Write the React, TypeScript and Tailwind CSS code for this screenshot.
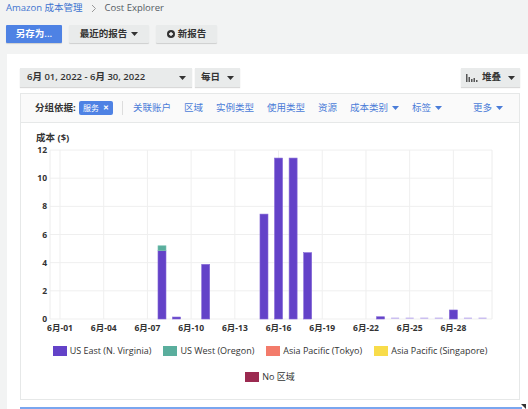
import React from 'react'

const FONT = "font-['Open_Sans','Noto_Sans_CJK_SC',sans-serif]"

const Caret: React.FC<{ className?: string }> = ({ className = 'fill-[#333]' }) => (
  <svg width="7" height="4" viewBox="0 0 7 4" className={className}>
    <path d="M0 0h7L3.5 4z" />
  </svg>
)

// chart geometry (svg coords)
const X0 = 29
const XR = 471
const Y0 = 175
const UNIT = 14.08
const dayX = (d: number) => 39 + (d - 1) * 14.57

type Bar = { d: number; v: number; t?: number; light?: boolean }

const bars: Bar[] = [
  { d: 8, v: 4.85, t: 0.35 },
  { d: 9, v: 0.14 },
  { d: 11, v: 3.88 },
  { d: 15, v: 7.45 },
  { d: 16, v: 11.43 },
  { d: 17, v: 11.43 },
  { d: 18, v: 4.71 },
  { d: 23, v: 0.16 },
  { d: 24, v: 0.1, light: true },
  { d: 25, v: 0.1, light: true },
  { d: 26, v: 0.1, light: true },
  { d: 27, v: 0.1, light: true },
  { d: 28, v: 0.64 },
  { d: 29, v: 0.1, light: true },
  { d: 30, v: 0.1, light: true },
]

const legendRows = [
  [
    { label: 'US East (N. Virginia)', color: 'bg-[#6342c8]' },
    { label: 'US West (Oregon)', color: 'bg-[#5aae9d]' },
    { label: 'Asia Pacific (Tokyo)', color: 'bg-[#f37b6b]' },
    { label: 'Asia Pacific (Singapore)', color: 'bg-[#f8dc4a]' },
  ],
  [{ label: 'No 区域', color: 'bg-[#9b2a50]' }],
]

const groupLinks = ['关联账户', '区域', '实例类型', '使用类型', '资源']

function CostChart() {
  const yTicks = [0, 2, 4, 6, 8, 10, 12]
  const xTicks = [1, 4, 7, 10, 13, 16, 19, 22, 25, 28]
  return (
    <svg width="497" height="192" viewBox="0 0 497 192" className="block">
      {yTicks.map((t) => {
        const y = Y0 - t * UNIT
        return (
          <g key={t}>
            <line x1={X0} x2={XR} y1={y} y2={y} stroke="#efefef" strokeWidth="1" />
            <text x="26" y={y + 3} textAnchor="end" fontSize="8.5" fontWeight="700" fill="#333">
              {t}
            </text>
          </g>
        )
      })}
      <line x1={X0} x2={X0} y1={Y0 - 12 * UNIT} y2={Y0} stroke="#ececec" />
      <line x1={XR} x2={XR} y1={Y0 - 12 * UNIT} y2={Y0} stroke="#ececec" />
      {xTicks.map((d) => (
        <g key={d}>
          <line x1={dayX(d)} x2={dayX(d)} y1={Y0 - 12 * UNIT} y2={Y0} stroke="#efefef" />
          <text x={dayX(d)} y="187" textAnchor="middle" fontSize="8.5" fontWeight="700" fill="#333">
            {`6月-${String(d).padStart(2, '0')}`}
          </text>
        </g>
      ))}
      {bars.map((b) => {
        const x = dayX(b.d) - 4
        const h = Math.max(b.v * UNIT, 1.5)
        return (
          <g key={b.d}>
            <rect
              x={x}
              y={Y0 - h}
              width="8"
              height={h}
              fill={b.light ? '#cbbff0' : '#6342c8'}
              stroke={b.light ? 'none' : '#8467d6'}
              strokeWidth="0.6"
            />
            {b.t && (
              <rect
                x={x}
                y={Y0 - h - b.t * UNIT}
                width="8"
                height={b.t * UNIT}
                fill="#5aae9d"
                stroke="#79c2b2"
                strokeWidth="0.6"
              />
            )}
          </g>
        )
      })}
    </svg>
  )
}

export default function App() {
  return (
    <div className={`${FONT} w-[528px] h-[409px] overflow-hidden bg-[#f2f3f3] text-[#333] flex flex-col`}>
      {/* breadcrumb */}
      <div className="h-[18px] pl-[6px] flex items-center gap-[8px] text-[9.5px]">
        <span className="text-[#3e74d0]">Amazon 成本管理</span>
        <svg width="6" height="9" viewBox="0 0 6 9" className="stroke-[#999] fill-none">
          <path d="M1 1l3.5 3.5L1 8" strokeWidth="1" />
        </svg>
        <span className="text-[#545b64]">Cost Explorer</span>
      </div>

      {/* action buttons */}
      <div className="mt-[8px] pl-[6px] flex items-center gap-[7px] text-[9.5px]">
        <button className="h-[18px] w-[56px] rounded-[1px] bg-[#4e82e4] text-white font-semibold shadow-[0_1px_1px_rgba(0,0,0,0.15)]">
          另存为...
        </button>
        <button className="h-[18px] w-[80px] flex items-center justify-center gap-[4px] rounded-[1px] bg-[#e9ebeb] font-semibold text-[#333] shadow-[0_1px_1px_rgba(0,0,0,0.15)]">
          最近的报告
          <Caret />
        </button>
        <button className="h-[18px] w-[61px] flex items-center justify-center gap-[3px] rounded-[1px] bg-[#e9ebeb] font-semibold text-[#333] shadow-[0_1px_1px_rgba(0,0,0,0.15)]">
          <svg width="8" height="8" viewBox="0 0 8 8">
            <circle cx="4" cy="4" r="4" fill="#333" />
            <path d="M4 2v4M2 4h4" stroke="#fff" strokeWidth="1.3" />
          </svg>
          新报告
        </button>
      </div>

      {/* main panel */}
      <div className="mt-[11px] ml-[7px] flex-1 bg-white pl-[13px] pr-[8px] pt-[14px] flex flex-col">
        <div className="h-[19px] flex items-stretch text-[9.5px] font-semibold">
          <div className="w-[172px] flex items-center justify-between pl-[7px] pr-[6px] bg-[#e9ebeb] shadow-[0_1px_1px_rgba(0,0,0,0.15)]">
            <span>6月 01, 2022 - 6月 30, 2022</span>
            <Caret />
          </div>
          <div className="ml-[3px] w-[45px] flex items-center justify-between px-[6px] bg-[#e9ebeb] shadow-[0_1px_1px_rgba(0,0,0,0.15)]">
            <span>每日</span>
            <Caret />
          </div>
          <div className="ml-auto w-[59px] flex items-center justify-center gap-[4px] bg-[#e9ebeb] shadow-[0_1px_1px_rgba(0,0,0,0.15)]">
            <svg width="12" height="8" viewBox="0 0 12 8" className="fill-[#555]">
              <rect x="0" y="0" width="1.5" height="8" />
              <rect x="2.5" y="3" width="1.5" height="5" />
              <rect x="5" y="5" width="1.5" height="3" />
              <rect x="7.5" y="4" width="1.5" height="4" />
              <rect x="10" y="6" width="1.5" height="2" />
            </svg>
            <span>堆叠</span>
            <Caret className="fill-[#333] ml-[3px]" />
          </div>
        </div>

        <div className="mt-[6px] h-[307px] border border-[#e6e8e8] flex flex-col">
          {/* group by header */}
          <div className="h-[29px] shrink-0 bg-[#fafafa] border-b border-[#e6e8e8] flex items-center pl-[14px] pr-[16px] text-[9.5px]">
            <span className="w-[39px] font-bold text-[#333] whitespace-nowrap">分组依据:</span>
            <span className="ml-[5px] w-[34px] h-[14px] pl-[4px] pr-[4px] flex items-center justify-between rounded-[2px] bg-[#4e82e4] text-white text-[8px]">
              服务
              <span className="font-bold text-[7px]">✕</span>
            </span>
            <span className="ml-[9px] w-px h-[14px] bg-[#ddd]" />
            <div className="ml-[10px] flex items-center text-[#4a7cd8]">
              {groupLinks.map((l) => (
                <span key={l} className="mr-[13px]">
                  {l}
                </span>
              ))}
              <span className="flex items-center gap-[4px] mr-[13px]">
                成本类别
                <Caret className="fill-[#4a7cd8]" />
              </span>
              <span className="flex items-center gap-[4px]">
                标签
                <Caret className="fill-[#4a7cd8]" />
              </span>
            </div>
            <span className="ml-auto flex items-center gap-[4px] text-[#4a7cd8]">
              更多
              <Caret className="fill-[#4a7cd8]" />
            </span>
          </div>

          {/* chart */}
          <div className="pt-[9px]">
            <div className="pl-[15px] h-[12px] flex items-center text-[9.5px] font-bold">成本 ($)</div>
            <CostChart />
          </div>

          {/* legend */}
          <div className="mt-[9px] flex flex-col items-center gap-[15px] text-[9px] text-[#333]">
            {legendRows.map((row, i) => (
              <div key={i} className="flex items-center gap-[12px] whitespace-nowrap">
                {row.map((l) => (
                  <div key={l.label} className="h-[11px] flex items-center gap-[3px]">
                    <span className={`w-[14px] h-[10px] ${l.color}`} />
                    <span>{l.label}</span>
                  </div>
                ))}
              </div>
            ))}
          </div>
        </div>

        {/* next section edge */}
        <div className="mt-[7px] relative">
          <div className="h-[2px] bg-[#7aa6ef] mr-[-2px]" />
          <svg width="5" height="5" viewBox="0 0 5 5" className="absolute right-[-6px] top-[-3px] fill-[#333]">
            <path d="M0 0h5v5z" />
          </svg>
        </div>
      </div>
    </div>
  )
}
